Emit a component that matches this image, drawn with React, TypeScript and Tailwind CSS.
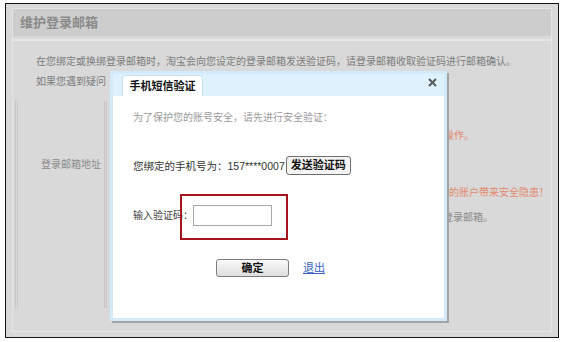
const font = "font-['Liberation_Sans','Noto_Sans_CJK_SC',sans-serif]"

const CloseIcon = () => (
    <svg width="9" height="9" viewBox="0 0 9 9">
        <path d="M1 1L8 8M8 1L1 8" stroke="#5a5a5a" strokeWidth="2" />
    </svg>
)

const Dialog = () => (
    <div className="absolute left-[110px] top-[68px] w-[337px] h-[250px] border-[3px] border-[#d2eaf9] shadow-[2px_2px_0_#a3a3a3] flex flex-col">
        <div className="h-[22px] bg-[#def1fc] flex items-end justify-between">
            <div className="ml-[9px] w-[81px] h-[21px] bg-white border border-b-0 border-[#c4e1f3] rounded-t-[3px] flex items-center justify-center text-[11px] font-bold text-[#111]">
                手机短信验证
            </div>
            <div className="self-start mt-[4px] mr-[7px]">
                <CloseIcon />
            </div>
        </div>
        <div className="relative flex-1 bg-white flex flex-col pl-[20px] text-[10px]">
            <p className="mt-[14px] leading-[16px] text-[#9a9a9a]">
                为了保护您的账号安全，请先进行安全验证：
            </p>
            <div className="mt-[30px] flex items-center h-[19px] text-[#333]">
                <span className="leading-[16px] text-[10.5px]">您绑定的手机号为：157****0007</span>
                <button className="ml-[1px] h-[19px] px-[4px] border border-[#6f6f6f] rounded-[3px] bg-[#f3f3f3] text-[11px] font-bold text-[#111] leading-none">
                    发送验证码
                </button>
            </div>
            <div className="mt-[30px] flex items-center h-[21px] text-[#444]">
                <span className="w-[60px]">输入验证码：</span>
                <div className="w-[79px] h-[21px] border border-[#a8a8a8] bg-white" />
            </div>
            <div className="mt-[33px] flex items-center ml-[83px]">
                <button className="w-[73px] h-[18px] border border-[#7d7d7d] rounded-[3px] bg-gradient-to-b from-[#fafafa] to-[#dedede] text-[11px] font-bold text-[#111] leading-none">
                    确定
                </button>
                <a className="ml-[14px] text-[11px] text-[#3a62c4] underline">退出</a>
            </div>
            <div className="absolute left-[67px] top-[98px] w-[108px] h-[46px] border-[2px] border-[#a3141b]" />
        </div>
    </div>
)

const App = () => {
    return (
        <div className={`relative w-[566px] h-[342px] bg-white ${font}`}>
            <div className="ml-[5px] mt-[3px] w-[554px] h-[335px] border border-[#151515] bg-[#d9d9d9] px-[6px] pt-[4px] pb-[5px]">
                <div className="h-full border border-[#e4e4e4] flex flex-col">
                    <div className="h-[27px] bg-[#cdcdcd] flex items-center pl-[7px] text-[13px] font-bold text-[#8a8a8a]">
                        维护登录邮箱
                    </div>
                    <div className="mt-[3px] h-[2px] bg-[#e6e6e6]" />
                    <p className="mt-[13px] pl-[23px] leading-[16px] text-[10px] text-[#7c7c7c]">
                        在您绑定或换绑登录邮箱时，淘宝会向您设定的登录邮箱发送验证码，请登录邮箱收取验证码进行邮箱确认。
                    </p>
                    <p className="mt-[4px] pl-[23px] leading-[16px] text-[10px] text-[#7c7c7c] whitespace-nowrap">
                        如果您遇到疑问
                    </p>
                    <div className="mt-[11px] flex text-[10px]">
                        <div className="ml-[2px] w-[92px] h-[207px] border-x-[3px] border-double border-[#c6c6c6] pt-[56px] pr-[3px] text-right leading-[16px] text-[#8a8a8a]">
                            登录邮箱地址
                        </div>
                        <div className="flex-1 flex flex-col leading-[16px] whitespace-nowrap">
                            <p className="mt-[27px] pr-[77px] text-right text-[#e2896d]">
                                请勿将验证码告诉他人，以免他人冒用您的身份进行操作。
                            </p>
                            <p className="mt-[41px] pr-[2px] text-right text-[#e2896d]">
                                泄露验证码可能会给您的账户带来安全隐患！
                            </p>
                            <p className="mt-[9px] pr-[58px] text-right text-[#8a8a8a]">
                                验证成功后即可使用新的登录邮箱。
                            </p>
                        </div>
                    </div>
                </div>
            </div>
            <Dialog />
        </div>
    )
}

export default App
